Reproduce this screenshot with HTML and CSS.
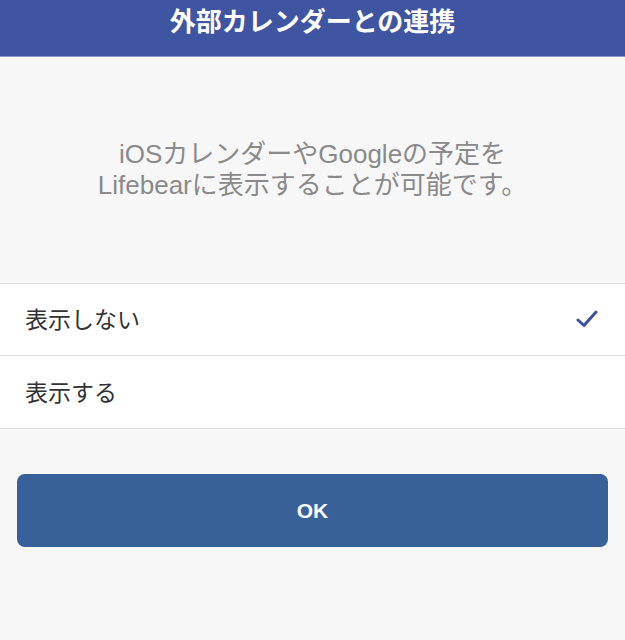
FILE: index.html
```html
<!DOCTYPE html>
<html lang="ja">
<head>
<meta charset="utf-8">
<link rel="stylesheet" href="styles.css">
</head>
<body>
<header class="nav"><h1 class="title">外部カレンダーとの連携</h1></header>
<p class="desc">iOSカレンダーやGoogleの予定を<br>Lifebearに表示することが可能です。</p>
<ul class="list">
  <li class="row"><span class="label">表示しない</span>
    <svg class="check" width="22" height="18" viewBox="0 0 22 18"><path d="M2 10 L8 15.5 L20 2" fill="none" stroke="#3e529c" stroke-width="3" stroke-linecap="round" stroke-linejoin="round"/></svg>
  </li>
  <li class="row"><span class="label">表示する</span></li>
</ul>
<div class="actions"><button class="ok">OK</button></div>
</body>
</html>
```
FILE: styles.css
```css
html, body { margin: 0; padding: 0; }
body {
  width: 625px;
  height: 640px;
  background: #f7f7f7;
  font-family: "Noto Sans CJK JP", "Noto Sans", sans-serif;
  overflow: hidden;
}
.nav {
  height: 56px;
  background: #4055a1;
  border-bottom: 1px solid #8c97c4;
  display: flex;
  justify-content: center;
  align-items: flex-start;
}
.title {
  margin: 0;
  color: #fff;
  font-size: 26px;
  font-weight: 700;
  line-height: 40px;
}
.desc {
  margin: 0;
  padding-top: 82px;
  height: 146px;
  box-sizing: border-box;
  text-align: center;
  color: #8a8a8a;
  font-size: 26px;
  line-height: 31px;
  font-family: "Liberation Sans", "Noto Sans CJK JP", sans-serif;
}
.list {
  list-style: none;
  margin: 0;
  margin-top: 80px;
  padding: 0;
  background: #fff;
  border-top: 1px solid #dcdcdc;
}
.row {
  height: 71px;
  border-bottom: 1px solid #dcdcdc;
  display: flex;
  align-items: center;
  justify-content: space-between;
  padding: 0 27px 0 25px;
  font-size: 23px;
  color: #333;
}
.row + .row { height: 72px; }
.label { margin-top: -3px; }
.check { margin-top: -2px; }
.actions {
  padding: 45px 17px 0 17px;
}
.ok {
  display: block;
  width: 100%;
  height: 73px;
  border: none;
  border-radius: 8px;
  background: #386099;
  color: #fff;
  font-size: 21px;
  font-weight: 700;
  font-family: "Liberation Sans", sans-serif;
}
```
